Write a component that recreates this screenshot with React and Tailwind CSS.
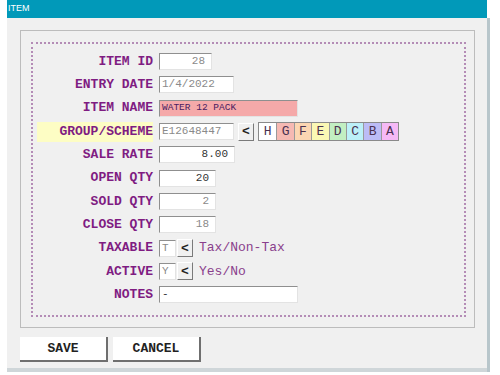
const mono = { fontFamily: '"Liberation Mono", "Courier New", monospace' };

function Field({ w, value, align = "left", dim = true, bg = "bg-white", small = false }) {
  return (
    <div
      className={`h-[17px] ${w} ${bg} border-t border-l border-[#8f8f8f] border-b border-r border-b-[#e3e3e3] border-r-[#e3e3e3] flex items-center px-[2px] ${
        align === "right" ? "justify-end pr-[6px]" : ""
      } ${small ? "text-[9.5px] text-[#4a2060]" : "text-[11px]"} ${dim && !small ? "text-[#8a8a8a]" : ""} ${
        !dim && !small ? "text-[#333]" : ""
      } leading-none`}
    >
      {value}
    </div>
  );
}

function Arrow() {
  return (
    <div className="h-[18px] w-[16px] bg-[#f0f0f0] border-t border-l border-white border-b border-r border-b-[#7a7a7a] border-r-[#7a7a7a] flex items-center justify-center text-[13px] font-bold text-[#222] leading-none">
      &lt;
    </div>
  );
}

const letters = [
  ["H", "bg-white"],
  ["G", "bg-[#f6b9b3]"],
  ["F", "bg-[#fcd6b2]"],
  ["E", "bg-[#fbf8b4]"],
  ["D", "bg-[#c2efc2]"],
  ["C", "bg-[#bcf0f8]"],
  ["B", "bg-[#bcbcf6]"],
  ["A", "bg-[#f6b9f6]"],
];

function Row({ label, highlight, children }) {
  return (
    <div className="flex items-center h-[23.3px]">
      <div
        className={`w-[116px] h-[20px] flex items-center justify-end text-[13px] font-bold text-[#7f1c82] ${
          highlight ? "bg-[#fdfdc4]" : ""
        }`}
      >
        {label}
      </div>
      <div className="ml-[6px] flex items-center">{children}</div>
    </div>
  );
}

export default function App() {
  return (
    <div className="w-[500px] h-[375px] bg-white relative overflow-hidden" style={mono}>
      <div className="ml-[7px] w-[483px] h-[372px] flex">
        <div className="w-[480px] flex flex-col">
          <div className="h-[18px] bg-[#0199b9] flex items-center pl-[1px] text-[9px] text-white" style={{ fontFamily: '"Liberation Sans", Arial, sans-serif' }}>
            ITEM
          </div>
          <div className="flex-1 bg-[#f0f0f0] pt-[12px] pl-[13px]">
            <div className="w-[455px] h-[298px] border border-[#bcbcbc] pt-[11px] pl-[10px]">
              <div className="w-[435px] h-[275px] border-2 border-dotted border-[#b48cb6] pt-[6px] pl-[4px]">
                <Row label="ITEM ID">
                  <Field w="w-[53px]" value="28" align="right" />
                </Row>
                <Row label="ENTRY DATE">
                  <Field w="w-[75px]" value="1/4/2022" />
                </Row>
                <Row label="ITEM NAME">
                  <Field w="w-[139px]" value="WATER 12 PACK" small bg="bg-[#f5a9a9]" />
                </Row>
                <Row label="GROUP/SCHEME" highlight>
                  <Field w="w-[75px]" value="E12648447" />
                  <div className="ml-[4px]">
                    <Arrow />
                  </div>
                  <div className="ml-[4px] flex border border-[#8a8a8a]">
                    {letters.map(([l, c], i) => (
                      <div
                        key={l}
                        className={`w-[17.4px] h-[17px] ${c} ${i > 0 ? "border-l border-[#9a9a9a]" : ""} flex items-center justify-center text-[13px] text-[#4a3050] leading-none`}
                      >
                        {l}
                      </div>
                    ))}
                  </div>
                </Row>
                <Row label="SALE RATE">
                  <Field w="w-[76px]" value="8.00" align="right" dim={false} />
                </Row>
                <Row label="OPEN QTY">
                  <Field w="w-[57px]" value="20" align="right" dim={false} />
                </Row>
                <Row label="SOLD QTY">
                  <Field w="w-[57px]" value="2" align="right" />
                </Row>
                <Row label="CLOSE QTY">
                  <Field w="w-[57px]" value="18" align="right" />
                </Row>
                <Row label="TAXABLE">
                  <Field w="w-[17px]" value="T" />
                  <div className="ml-[1px]">
                    <Arrow />
                  </div>
                  <span className="ml-[6px] text-[13px] text-[#8a3f8c]">Tax/Non-Tax</span>
                </Row>
                <Row label="ACTIVE">
                  <Field w="w-[17px]" value="Y" />
                  <div className="ml-[1px]">
                    <Arrow />
                  </div>
                  <span className="ml-[6px] text-[13px] text-[#8a3f8c]">Yes/No</span>
                </Row>
                <Row label="NOTES">
                  <Field w="w-[139px]" value="-" dim={false} />
                </Row>
              </div>
            </div>
            <div className="flex gap-[5px] mt-[9px]">
              <div className="w-[88px] h-[25px] bg-white border-b-2 border-r-2 border-[#6f6f6f] flex items-center justify-center text-[13px] font-bold text-[#222]">
                SAVE
              </div>
              <div className="w-[88px] h-[25px] bg-white border-b-2 border-r-2 border-[#6f6f6f] flex items-center justify-center text-[13px] font-bold text-[#222]">
                CANCEL
              </div>
            </div>
          </div>
          <div className="h-[4px] bg-[#cfd6d9]" />
        </div>
        <div className="w-[3px] mt-[18px] bg-[#b8c6cb]" />
      </div>
    </div>
  );
}
